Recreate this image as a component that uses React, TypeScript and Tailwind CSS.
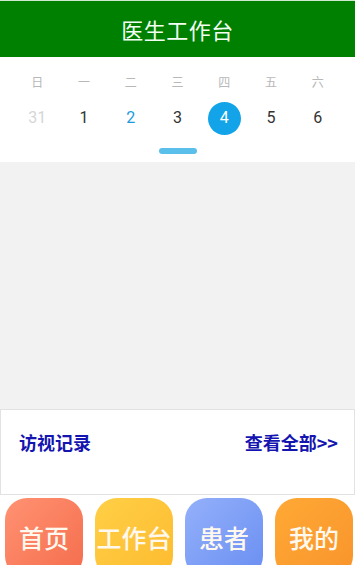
import React from "react";

const weekdays = ["日", "一", "二", "三", "四", "五", "六"];

const days = [
    { d: "31", cls: "text-[#d6d6d6]" },
    { d: "1", cls: "text-[#333333]" },
    { d: "2", cls: "text-[#1a9be0]" },
    { d: "3", cls: "text-[#333333]" },
    { d: "4", cls: "text-white", selected: true },
    { d: "5", cls: "text-[#333333]" },
    { d: "6", cls: "text-[#333333]" },
];

const tabs = [
    { label: "首页", cls: "bg-gradient-to-br from-[#ff9272] to-[#f46c4c]" },
    { label: "工作台", cls: "bg-gradient-to-br from-[#ffcf45] to-[#fdbb2f]" },
    { label: "患者", cls: "bg-gradient-to-br from-[#94b0fa] to-[#6a8ef2]" },
    { label: "我的", cls: "bg-gradient-to-br from-[#ffa935] to-[#f8942c]" },
];

export default function App() {
    return (
        <div
            className="w-[355px] h-[565px] overflow-hidden flex flex-col bg-white"
            style={{ fontFamily: '"Noto Sans CJK SC", Roboto, sans-serif' }}
        >
            {/* header */}
            <div className="h-[57px] shrink-0 bg-[#008000] border-t border-[#cfe8cf] flex items-center justify-center">
                <span className="text-[22px] text-[#f2fff2] tracking-[0.5px]">医生工作台</span>
            </div>

            {/* calendar */}
            <div className="h-[105px] shrink-0 bg-white flex flex-col">
                <div className="grid grid-cols-7 px-[14px] pt-[14px]">
                    {weekdays.map((w) => (
                        <div key={w} className="text-center text-[12px] leading-[22px] text-[#b8b8b8]">
                            {w}
                        </div>
                    ))}
                </div>
                <div className="grid grid-cols-7 px-[14px] mt-[8px]">
                    {days.map((item) => (
                        <div key={item.d} className="flex items-center justify-center h-[34px]">
                            {item.selected ? (
                                <div className="w-[33px] h-[33px] rounded-full bg-[#12a3e8] flex items-center justify-center">
                                    <span className="text-[16px] text-white" style={{ fontFamily: "Roboto, sans-serif" }}>
                                        {item.d}
                                    </span>
                                </div>
                            ) : (
                                <span className={`text-[16px] ${item.cls}`} style={{ fontFamily: "Roboto, sans-serif" }}>
                                    {item.d}
                                </span>
                            )}
                        </div>
                    ))}
                </div>
                <div className="flex justify-center mt-[13px]">
                    <div className="w-[38px] h-[6px] rounded-full bg-[#5bbfec]" />
                </div>
            </div>

            {/* empty content */}
            <div className="flex-1 bg-[#f2f2f2]" />

            {/* visit records */}
            <div className="h-[86px] shrink-0 border border-[#e2e2e2] bg-white flex items-start justify-between pl-[18px] pr-[16px] pt-[19px]">
                <span className="text-[18px] leading-[26px] font-bold text-[#1414b0]">访视记录</span>
                <span className="text-[18px] leading-[26px] font-bold text-[#1414b0]">查看全部&gt;&gt;</span>
            </div>

            {/* bottom tabs */}
            <div className="h-[70px] shrink-0 bg-white flex items-start gap-[12px] pl-[5px] pt-[3px]">
                {tabs.map((t) => (
                    <div
                        key={t.label}
                        className={`w-[78px] h-[80px] shrink-0 rounded-[22px] flex items-center justify-center ${t.cls}`}
                    >
                        <span className="text-[25px] font-medium text-[#fff8ee] whitespace-nowrap">{t.label}</span>
                    </div>
                ))}
            </div>
        </div>
    );
}
